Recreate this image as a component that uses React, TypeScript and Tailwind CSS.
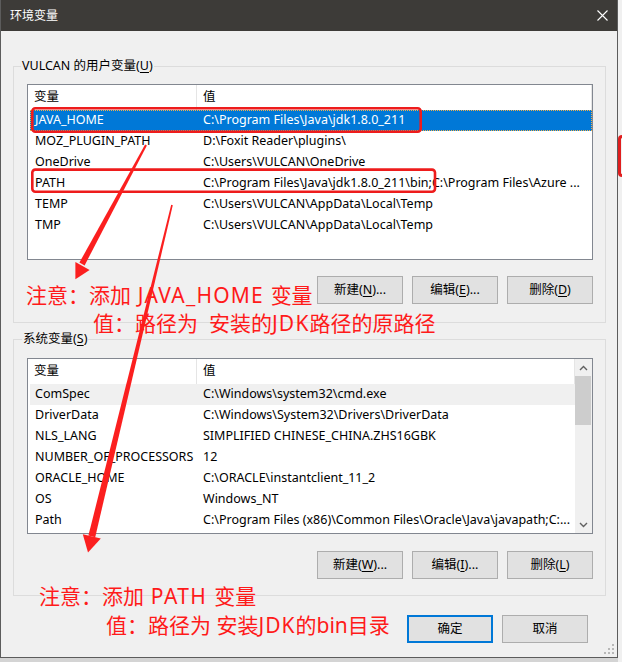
import clsx from 'clsx';

type EnvVar = { name: string; value: string };

const userVars: EnvVar[] = [
  { name: 'JAVA_HOME', value: 'C:\\Program Files\\Java\\jdk1.8.0_211' },
  { name: 'MOZ_PLUGIN_PATH', value: 'D:\\Foxit Reader\\plugins\\' },
  { name: 'OneDrive', value: 'C:\\Users\\VULCAN\\OneDrive' },
  { name: 'PATH', value: 'C:\\Program Files\\Java\\jdk1.8.0_211\\bin;C:\\Program Files\\Azure ...' },
  { name: 'TEMP', value: 'C:\\Users\\VULCAN\\AppData\\Local\\Temp' },
  { name: 'TMP', value: 'C:\\Users\\VULCAN\\AppData\\Local\\Temp' },
];

const systemVars: EnvVar[] = [
  { name: 'ComSpec', value: 'C:\\Windows\\system32\\cmd.exe' },
  { name: 'DriverData', value: 'C:\\Windows\\System32\\Drivers\\DriverData' },
  { name: 'NLS_LANG', value: 'SIMPLIFIED CHINESE_CHINA.ZHS16GBK' },
  { name: 'NUMBER_OF_PROCESSORS', value: '12' },
  { name: 'ORACLE_HOME', value: 'C:\\ORACLE\\instantclient_11_2' },
  { name: 'OS', value: 'Windows_NT' },
  { name: 'Path', value: 'C:\\Program Files (x86)\\Common Files\\Oracle\\Java\\javapath;C:...' },
];

function WinButton({ label, hotkey, dots = false, primary = false }: { label: string; hotkey?: string; dots?: boolean; primary?: boolean }) {
  return (
    <button
      className={clsx(
        'flex h-[28px] w-[86px] items-center justify-center bg-[#e1e1e1] leading-none',
        primary ? 'h-[27px] border-2 border-[#0078d7]' : 'border border-[#adadad]',
      )}
    >
      {label}
      {hotkey && (
        <>
          (<span className="underline underline-offset-2">{hotkey}</span>)
        </>
      )}
      {dots && '...'}
    </button>
  );
}

function Chevron({ up }: { up?: boolean }) {
  return (
    <svg width="9" height="6" viewBox="0 0 9 6">
      <polyline
        points={up ? '1,5 4.5,1.5 8,5' : '1,1 4.5,4.5 8,1'}
        fill="none"
        stroke="#606060"
        strokeWidth="1.4"
      />
    </svg>
  );
}

function VarList({ rows, selected, hovered, scroll }: { rows: EnvVar[]; selected?: number; hovered?: number; scroll?: boolean }) {
  return (
    <div className="flex h-[176px] border border-[#828790] bg-white">
      <div className="flex min-w-0 flex-1 flex-col">
        <div className="flex h-[25px]">
          <div className="flex w-[169px] shrink-0 items-center border-r border-[#e5e5e5] pl-[6px]">变量</div>
          <div className="flex flex-1 items-center border-r border-[#e5e5e5] pl-[6px]">值</div>
        </div>
        {rows.map((row, i) => (
          <div
            key={row.name}
            className={clsx(
              'ml-[2px] flex h-[21px] items-center whitespace-nowrap',
              i === selected && 'bg-[#0078d7] text-white outline-1 -outline-offset-1 outline-dotted outline-[#f2b04a]',
              i === hovered && 'bg-[#f0f0f0]',
            )}
          >
            <div className="w-[167px] shrink-0 pl-[5px]">{row.name}</div>
            <div className="min-w-0 flex-1 overflow-hidden pl-[6px]">{row.value}</div>
          </div>
        ))}
      </div>
      {scroll && (
        <div className="flex w-[17px] flex-col bg-[#f0f0f0]">
          <div className="flex h-[17px] items-center justify-center">
            <Chevron up />
          </div>
          <div className="mr-[1px] h-[49px] bg-[#cdcdcd]" />
          <div className="flex-1" />
          <div className="flex h-[17px] items-center justify-center">
            <Chevron />
          </div>
        </div>
      )}
    </div>
  );
}

export default function App() {
  return (
    <div className="relative flex h-[662px] w-[622px] overflow-hidden bg-[#d4d4d4] font-['Noto_Sans','Noto_Sans_CJK_SC',sans-serif] text-[12.5px] text-black">
      <div className="relative flex h-[658px] w-[618px] flex-col border-x border-b border-[#5c5c5c] bg-[#f0f0f0]">
        {/* title bar */}
        <div className="flex h-[31px] shrink-0 items-center justify-between bg-[#3d3b38] pl-[9px] pr-[9px] text-[12px] text-white">
          <span>环境变量</span>
          <svg width="11" height="11" viewBox="0 0 11 11">
            <path d="M0.5 0.5 L10.5 10.5 M10.5 0.5 L0.5 10.5" stroke="#ffffff" strokeWidth="1.1" />
          </svg>
        </div>

        <div className="flex flex-1 flex-col pl-[12px] pr-[11px] pt-[27px]">
          <fieldset className="border border-[#dcdcdc] p-0">
            <legend className="ml-[7px] px-[1px] leading-[16px]">
              VULCAN 的用户变量(<span className="underline underline-offset-2">U</span>)
            </legend>
            <div className="pb-[18px] pl-[13px] pr-[12px] pt-[10px]">
              <VarList rows={userVars} selected={0} />
              <div className="mt-[16px] flex justify-end gap-[9px]">
                <WinButton label="新建" hotkey="N" dots />
                <WinButton label="编辑" hotkey="E" dots />
                <WinButton label="删除" hotkey="D" />
              </div>
            </div>
          </fieldset>

          <fieldset className="mt-[8px] border border-[#dcdcdc] p-0">
            <legend className="ml-[8px] px-[1px] leading-[16px]">
              系统变量(<span className="underline underline-offset-2">S</span>)
            </legend>
            <div className="pb-[16px] pl-[13px] pr-[12px] pt-[11px]">
              <VarList rows={systemVars} hovered={0} scroll />
              <div className="mt-[17px] flex justify-end gap-[9px]">
                <WinButton label="新建" hotkey="W" dots />
                <WinButton label="编辑" hotkey="I" dots />
                <WinButton label="删除" hotkey="L" />
              </div>
            </div>
          </fieldset>

          <div className="mt-[19px] flex justify-end gap-[9px] pr-[18px]">
            <WinButton label="确定" primary />
            <WinButton label="取消" />
          </div>
        </div>

        {/* resize grip */}
        <svg className="absolute bottom-[2px] right-[2px]" width="11" height="11" viewBox="0 0 11 11">
          <g fill="#b8b8b8">
            <rect x="8" y="0" width="2" height="2" />
            <rect x="8" y="4" width="2" height="2" />
            <rect x="4" y="4" width="2" height="2" />
            <rect x="8" y="8" width="2" height="2" />
            <rect x="4" y="8" width="2" height="2" />
            <rect x="0" y="8" width="2" height="2" />
          </g>
        </svg>
      </div>

      {/* edge of the window behind */}
      <div className="h-full w-[4px] bg-[#f0f0f0] pt-[135px]">
        <div className="h-[42px] w-[4px] rounded-l-[4px] border-y-[3px] border-l-[3px] border-[#e01e1e]" />
      </div>

      {/* red annotations drawn over the screenshot */}
      <svg className="pointer-events-none absolute inset-0" width="622" height="662" viewBox="0 0 622 662">
        <g fill="none" stroke="#ee1c1c" strokeWidth="2.6">
          <rect x="32.3" y="108.3" width="388.4" height="23.4" rx="3" />
          <rect x="32.3" y="169.6" width="402.7" height="22.2" rx="3" />
        </g>
        <g fill="#fb1f1f">
          <polygon points="146.9,145.5 84.6,265.4 79.4,262.6 145.1,144.5" />
          <polygon points="89.6,269.9 75.4,279.2 75.4,262.1" />
          <polygon points="172.8,205.2 95.2,537.2 88.4,535.6 171.2,204.8" />
          <polygon points="100.8,538.6 88,552.5 82.8,534.2" />
        </g>
      </svg>

      <p className="absolute left-[26px] top-[281px] whitespace-pre text-[21px] leading-[28px] text-[#ff1a1a]">
        注意：添加<span className="tracking-[1.2px]"> JAVA_HOME </span>变量
      </p>
      <p className="absolute left-[93px] top-[309px] whitespace-pre text-[21px] leading-[28px] text-[#ff1a1a]">
        值：路径为  安装的<span className="tracking-[1.2px]">JDK</span>路径的原路径
      </p>
      <p className="absolute left-[39px] top-[582px] whitespace-pre text-[21px] leading-[28px] text-[#ff1a1a]">
        注意：添加<span className="tracking-[1.4px]"> PATH </span>变量
      </p>
      <p className="absolute left-[106px] top-[611px] whitespace-pre text-[21px] leading-[28px] text-[#ff1a1a]">
        值：路径为 安装<span className="tracking-[1px]">JDK</span>的bin目录
      </p>
    </div>
  );
}
